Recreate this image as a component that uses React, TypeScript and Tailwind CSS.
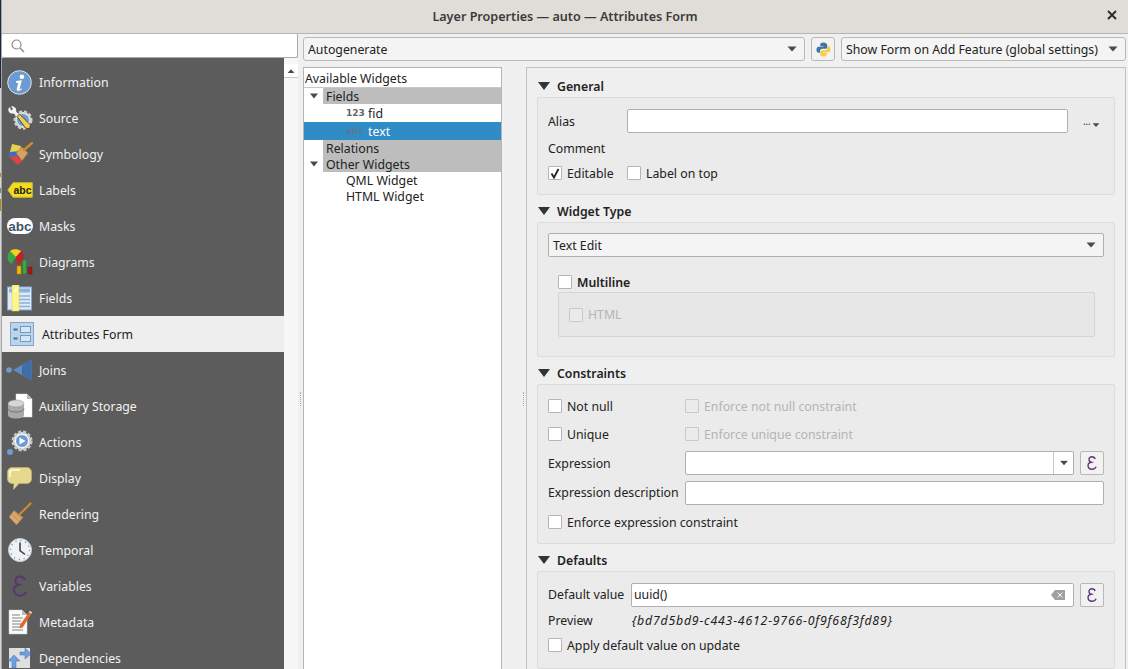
import React from 'react';

const FONT = { fontFamily: '"Noto Sans", sans-serif' };

// flex item text: the extra top padding moves the label 1px down inside its centred row
function T({ children, className = '' }: { children: React.ReactNode; className?: string }) {
  return <span className={`pt-[2px] ${className}`}>{children}</span>;
}

function Caret({ className = '' }: { className?: string }) {
  return (
    <svg width="10" height="6" viewBox="0 0 10 6" className={className}>
      <path d="M0.5 0.5h9L5 5.5z" fill="#4a4a4a" />
    </svg>
  );
}

function SectionArrow() {
  return (
    <svg width="12" height="8" viewBox="0 0 12 8" className="shrink-0">
      <path d="M0 0h12L6 8z" fill="#333" />
    </svg>
  );
}

function InfoIcon() {
  return (
    <svg width="25" height="25" viewBox="0 0 26 26">
      <circle cx="13" cy="13" r="12.3" fill="#6b9bd2" stroke="#dfe8f3" />
      <circle cx="15.5" cy="7" r="2.4" fill="#fff" />
      <path d="M9.5 11.5l6-.8-2.3 8.6c-.2.8.6.8 2-.3l.4.8c-2.3 2.2-6 3-5.4-.4l1.5-5.9-2.2-.3z" fill="#fff" />
    </svg>
  );
}

function SourceIcon() {
  return (
    <svg width="26" height="24" viewBox="0 0 26 24">
      <circle cx="16" cy="14" r="8" fill="#e6e6e6" stroke="#d0d0d0" strokeDasharray="3 1.8" strokeWidth="3" />
      <circle cx="16" cy="14" r="6" fill="#6f9bd0" />
      <path d="M3 1c-2 1-2.500 4 0 6 2 1 3.500.5 4.500 1l4 4 2-2-4-4c-.5-1 0-2.500-1-4C7 .5 5.500 0 4 .5l2 2.500-2 1.500z" fill="#f2f2f2" />
      <path d="M10 10.500l2.500-2.500 11 11-1 4-4-1z" fill="#e9cf55" stroke="#3a3210" strokeWidth=".8" />
    </svg>
  );
}

function SymbologyIcon() {
  return (
    <svg width="26" height="24" viewBox="0 0 26 24">
      <path d="M1 14l8-1 6 6-4 4z" fill="#d9444a" />
      <path d="M2 9l10-2 3 6-13 2z" fill="#3f6fb8" />
      <path d="M5 2l9 2-1 5-10 1z" fill="#e8d04a" />
      <path d="M9 11l6-6 6 6-6 8z" fill="#d9a066" stroke="#9a6a30" strokeWidth=".6" />
      <path d="M17 8l8-7" stroke="#d08a2a" strokeWidth="2.4" strokeLinecap="round" />
    </svg>
  );
}

function LabelsIcon() {
  return (
    <svg width="26" height="16" viewBox="0 0 26 16">
      <path d="M6 .7h19.3v14.6H6L.8 8z" fill="#f5dc1c" stroke="#c9b53a" />
      <text x="15.5" y="12" fontSize="10.5" fontWeight="700" textAnchor="middle" fill="#222" fontFamily="Liberation Sans, sans-serif">abc</text>
    </svg>
  );
}

function MasksIcon() {
  return (
    <svg width="28" height="18" viewBox="0 0 28 18">
      <rect x="1" y="1" width="26" height="16" rx="8" fill="#fff" />
      <text x="14" y="14" fontSize="13.5" fontWeight="700" textAnchor="middle" fill="#44546a" fontFamily="Liberation Sans, sans-serif">abc</text>
    </svg>
  );
}

function DiagramsIcon() {
  return (
    <svg width="26" height="26" viewBox="0 0 26 26">
      <path d="M9 8L8 0.5C4 .5 .5 3.5.5 8c0 3 1.500 5.500 4 7z" fill="#3aa648" />
      <path d="M9 8L3 2c3-2.500 8-2.500 11 0z" fill="#f2cf20" />
      <path d="M9 8l6-6c2 2 2 8 0 11l-5 2.500z" fill="#c71f1f" />
      <rect x="10" y="17" width="4" height="8" fill="#f4b800" stroke="#b57d00" strokeWidth=".5" />
      <rect x="15.500" y="11" width="4" height="14" fill="#3aa648" stroke="#1e7a2a" strokeWidth=".5" />
      <rect x="21" y="18" width="4" height="7" fill="#a3191c" stroke="#6e1012" strokeWidth=".5" />
    </svg>
  );
}

function FieldsIcon() {
  return (
    <svg width="26" height="27" viewBox="0 0 26 27">
      <rect x=".5" y="2" width="24" height="23" fill="#dfe9f4" stroke="#7ea6d0" />
      <rect x="2" y="3.500" width="21" height="4" fill="#8db3da" />
      <path d="M9 11h14M9 14.500h14M9 18h14M9 21.500h14" stroke="#8db3da" strokeWidth="1.500" />
      <rect x="5" y="0" width="7" height="26" fill="#fbf68d" stroke="#dcd24a" strokeWidth=".5" />
      <rect x="7.500" y="4.500" width="2" height="2" fill="#fff" />
    </svg>
  );
}

function AttrFormIcon() {
  return (
    <svg width="24" height="24" viewBox="0 0 24 24">
      <rect x=".5" y=".5" width="23" height="23" fill="#bcd3e8" stroke="#7ea6d0" />
      <rect x="10.500" y="4.500" width="10" height="6" fill="#d8e6f3" stroke="#6f9bc8" />
      <rect x="10.500" y="13.500" width="10" height="6" fill="#d8e6f3" stroke="#6f9bc8" />
      <rect x="3.500" y="6.500" width="4" height="2" fill="#456f9c" />
      <rect x="3.500" y="15.500" width="4" height="2" fill="#456f9c" />
    </svg>
  );
}

function JoinsIcon() {
  return (
    <svg width="27" height="22" viewBox="0 0 27 22">
      <circle cx="3" cy="11" r="2.800" fill="#6f9bd0" />
      <path d="M7 11L25.500.5v21z" fill="#5d8cc2" />
      <path d="M16 6l9.500-5.500v21L16 16z" fill="#3f6ea6" />
    </svg>
  );
}

function StorageIcon() {
  return (
    <svg width="26" height="26" viewBox="0 0 26 26">
      <path d="M9 1h11l5 5v18H9z" fill="#fff" stroke="#ddd" strokeWidth=".5" />
      <path d="M20 1v5h5z" fill="#bbb" />
      <path d="M1 11v11c0 2 3 3.500 8 3.500s8-1.500 8-3.500V11z" fill="#a9a9a9" />
      <ellipse cx="9" cy="10.500" rx="8" ry="3.500" fill="#d6d6d6" stroke="#8d8d8d" strokeWidth=".5" />
      <path d="M1 15.500c0 2 3 3.500 8 3.500s8-1.500 8-3.500" fill="none" stroke="#666" strokeWidth=".8" />
    </svg>
  );
}

function ActionsIcon() {
  return (
    <svg width="28" height="28" viewBox="0 0 28 28">
      <circle cx="16" cy="13" r="9" fill="#e2e2e2" stroke="#c8c8c8" strokeDasharray="3 1.800" strokeWidth="3" />
      <circle cx="16" cy="13" r="6.500" fill="#6b9bd2" stroke="#fff" />
      <path d="M13.500 9.500l6 3.500-6 3.500z" fill="#fff" />
      <circle cx="4" cy="24" r="3" fill="#6f9bd0" />
    </svg>
  );
}

function DisplayIcon() {
  return (
    <svg width="25" height="23" viewBox="0 0 25 23">
      <path d="M5 .5h15c2.500 0 4.500 2 4.500 4.500v7c0 2.500-2 4.500-4.500 4.500h-8L6.500 22.500 7 16.500H5C2.500 16.500.5 14.500.5 12V5C.5 2.500 2.500.5 5 .5z" fill="#e6d98f" stroke="#c9bb6a" strokeWidth=".6" />
      <path d="M3 10V5.500C3 4 4 3 5.500 3H13" fill="none" stroke="#fffbe0" strokeWidth="1.500" />
    </svg>
  );
}

function RenderingIcon() {
  return (
    <svg width="24" height="24" viewBox="0 0 24 24">
      <path d="M6 8.500l9 7-6.500 7.500L1 15z" fill="#d9a870" stroke="#a97a3e" strokeWidth=".6" />
      <path d="M4 12l7 7M6.500 10l7 6.500" stroke="#a97a3e" strokeWidth=".6" />
      <path d="M12 12L22.500 1.500" stroke="#d08a2a" strokeWidth="2.200" strokeLinecap="round" />
    </svg>
  );
}

function TemporalIcon() {
  return (
    <svg width="24" height="24" viewBox="0 0 24 24">
      <circle cx="12" cy="12" r="11.500" fill="#f0f2f5" stroke="#c8ccd2" />
      <circle cx="12" cy="12" r="9.500" fill="none" stroke="#6f9bd0" strokeWidth="1.400" strokeDasharray="1.200 3.770" />
      <path d="M12 4.500V12.500l5 4" fill="none" stroke="#444" strokeWidth="1.600" />
    </svg>
  );
}

function Epsilon({ className = '' }: { className?: string }) {
  return (
    <svg width="16" height="20" viewBox="0 0 16 20" className={className}>
      <path
        d="M12.300 4.500C11.800 2.500 10.300 1.300 8 1.300 5.500 1.300 3.800 2.800 3.800 5c0 2 1.600 3.500 3.700 4-3 .3-5 2-5 4.500 0 3 2.400 5.200 5.500 5.200 2.600 0 4.600-1.300 5.700-3.600"
        fill="none"
        stroke="#5a3571"
        strokeWidth="1.900"
      />
      <path d="M6.500 9h3.500" stroke="#5a3571" strokeWidth="1.200" />
    </svg>
  );
}

function MetadataIcon() {
  return (
    <svg width="24" height="26" viewBox="0 0 24 26">
      <path d="M1 1h13l5 5v19H1z" fill="#fafafa" stroke="#ccc" strokeWidth=".5" />
      <path d="M14 1v5h5z" fill="#bbb" />
      <path d="M4 6h8M4 9h11M4 12h9M4 15h11M4 18h11M4 21h11" stroke="#666" strokeWidth=".8" />
      <path d="M12 16L21 3l2.500 1.800L15 18l-3.500 1.500z" fill="#e06a2c" />
      <path d="M21 3l.8-1.200 2.200 1.600-.5 1.400z" fill="#eee" />
    </svg>
  );
}

function DepsIcon() {
  return (
    <svg width="25" height="22" viewBox="0 0 25 22">
      <rect x="2" y="1" width="21" height="20" fill="#dfdfdf" />
      <path d="M13 5h5V1l6 6-6 5V8h-5z" fill="#6f9fdc" stroke="#3f6fb0" strokeWidth=".5" />
      <path d="M1 14l6-6 6 6H9v7H5v-7z" fill="#6f9fdc" stroke="#3f6fb0" strokeWidth=".5" />
    </svg>
  );
}

const navItems = [
  { label: 'Information', icon: <InfoIcon /> },
  { label: 'Source', icon: <SourceIcon /> },
  { label: 'Symbology', icon: <SymbologyIcon /> },
  { label: 'Labels', icon: <LabelsIcon /> },
  { label: 'Masks', icon: <MasksIcon /> },
  { label: 'Diagrams', icon: <DiagramsIcon /> },
  { label: 'Fields', icon: <FieldsIcon /> },
  { label: 'Attributes Form', icon: <AttrFormIcon />, active: true },
  { label: 'Joins', icon: <JoinsIcon /> },
  { label: 'Auxiliary Storage', icon: <StorageIcon /> },
  { label: 'Actions', icon: <ActionsIcon /> },
  { label: 'Display', icon: <DisplayIcon /> },
  { label: 'Rendering', icon: <RenderingIcon /> },
  { label: 'Temporal', icon: <TemporalIcon /> },
  { label: 'Variables', icon: <Epsilon className="scale-110" /> },
  { label: 'Metadata', icon: <MetadataIcon /> },
  { label: 'Dependencies', icon: <DepsIcon /> },
];

function Sidebar() {
  return (
    <div className="w-[296px] shrink-0 h-full flex flex-col">
      <div className="h-[24px] bg-white border border-[#a8a8a8] border-t-0 border-l-0 rounded-[2px] flex items-center pl-[9px] shrink-0">
        <svg width="14" height="14" viewBox="0 0 14 14">
          <circle cx="5.500" cy="5.500" r="4.500" fill="none" stroke="#8a8a8a" strokeWidth="1.200" />
          <path d="M9 9l4 4" stroke="#8a8a8a" strokeWidth="1.400" />
        </svg>
      </div>
      <div className="flex-1 flex min-h-0">
        <div className="w-[282px] bg-[#5c5c5c] pt-[6px] overflow-hidden">
          {navItems.map((item) =>
            item.active ? (
              <div key={item.label} className="h-[36px] bg-[#eeeeee] flex items-center pl-[8px] text-[#222]">
                <span className="w-[32px] flex items-center">{item.icon}</span>
                <T>{item.label}</T>
              </div>
            ) : (
              <div key={item.label} className="h-[36px] flex items-center text-[#f2f2f2]">
                <span className="w-[35px] mr-[2px] flex items-center justify-center">{item.icon}</span>
                <T>{item.label}</T>
              </div>
            ),
          )}
        </div>
        <div className="w-[14px] bg-[#f7f7f7] pt-[6px]">
          <div className="h-[14px] flex items-center justify-center bg-white border-b border-[#c8c8c8]">
            <Caret className="rotate-180 scale-75" />
          </div>
        </div>
      </div>
    </div>
  );
}

function TreeRow({ label, heading, caret }: { label: string; heading?: boolean; caret?: boolean }) {
  return (
    <div className="h-[16px] flex items-center">
      <span className="w-[19px] flex justify-center">{caret && <Caret className="scale-x-90" />}</span>
      <span className={heading ? 'flex-1 h-full bg-[#bdbdbd] pl-[3px] pt-[1px] leading-[15px]' : 'pl-[23px] h-full pt-[1px] leading-[15px]'}>{label}</span>
    </div>
  );
}

function FieldRow({ tag, label, selected }: { tag: string; label: string; selected?: boolean }) {
  return (
    <div className={`h-[18px] flex items-center ${selected ? 'bg-[#308cc6] text-white' : ''}`}>
      <span
        className={`ml-[42px] w-[22px] pt-[2px] text-[9px] font-bold ${selected ? 'text-[#567a94]' : 'text-[#666]'}`}
        style={{ fontFamily: '"DejaVu Sans", sans-serif' }}
      >
        {tag}
      </span>
      <T>{label}</T>
    </div>
  );
}

function WidgetTree() {
  return (
    <div className="w-[199px] shrink-0 h-full bg-white border border-[#b5b5b5] border-b-0 text-[#222]">
      <div className="h-[20px] border-b border-[#c8c8c8] pl-[1px] pt-[1px] leading-[19px]">Available Widgets</div>
      <TreeRow label="Fields" heading caret />
      <FieldRow tag="123" label="fid" />
      <FieldRow tag="abc" label="text" selected />
      <TreeRow label="Relations" heading />
      <TreeRow label="Other Widgets" heading caret />
      <TreeRow label="QML Widget" />
      <TreeRow label="HTML Widget" />
    </div>
  );
}

function Check({ checked, disabled }: { checked?: boolean; disabled?: boolean }) {
  return (
    <span
      className={`w-[14px] h-[14px] shrink-0 rounded-[1px] border flex items-center justify-center ${
        disabled ? 'border-[#c9c9c9] bg-[#ebebeb]' : 'border-[#b5b5b5] bg-white'
      }`}
    >
      {checked && (
        <svg width="10" height="11" viewBox="0 0 10 11">
          <path d="M1.500 5.500L4 9.500 8.500 1" fill="none" stroke="#222" strokeWidth="1.800" />
        </svg>
      )}
    </span>
  );
}

function CheckLabel({ label, checked, disabled, bold }: { label: string; checked?: boolean; disabled?: boolean; bold?: boolean }) {
  return (
    <span className={`flex items-center gap-[5px] ${disabled ? 'text-[#b4b4b4]' : ''} ${bold ? 'font-semibold' : ''}`}>
      <Check checked={checked} disabled={disabled} />
      <T>{label}</T>
    </span>
  );
}

function Section({ title, className, children }: { title: string; className: string; children: React.ReactNode }) {
  return (
    <div>
      <div className="h-[16px] flex items-center gap-[7px] pl-[11px] font-semibold text-[#222]">
        <SectionArrow />
        <T>{title}</T>
      </div>
      <div className={`ml-[10px] mr-[10px] mt-[3px] bg-[#ebebeb] border border-[#dcdcdc] rounded-[2px] ${className}`}>
        {children}
      </div>
    </div>
  );
}

function TextBox({ value, className = '', children }: { value?: string; className?: string; children?: React.ReactNode }) {
  return (
    <div className={`h-[24px] bg-white border border-[#b0b0b0] rounded-[2px] flex items-center pl-[2px] ${className}`}>
      <span className="flex-1">{value}</span>
      {children}
    </div>
  );
}

function EpsButton() {
  return (
    <div className="w-[24px] h-[24px] ml-[6px] shrink-0 rounded-[2px] border border-[#b8b8b8] bg-[#f2f2f2] flex items-center justify-center">
      <Epsilon className="scale-[0.72]" />
    </div>
  );
}

function Form() {
  return (
    <div className="flex-1 h-full bg-[#efefef] border border-[#c0c0c0] border-b-0 pt-[10px] text-[#222] overflow-hidden">
      <Section title="General" className="h-[98px] px-[10px] pt-[11px]">
        <div className="flex items-center h-[24px]">
          <T className="w-[79px]">Alias</T>
          <TextBox className="w-[441px]" />
          <span className="ml-[15px] relative w-[18px] text-[#444] leading-[8px] tracking-tighter">
            <span className="text-[11px]">...</span>
            <Caret className="absolute right-0 top-[5px] scale-75" />
          </span>
        </div>
        <div className="h-[22px] mt-[4px] flex items-center">
          <T>Comment</T>
        </div>
        <div className="h-[20px] mt-[4px] flex items-center">
          <span className="w-[79px]">
            <CheckLabel label="Editable" checked />
          </span>
          <CheckLabel label="Label on top" />
        </div>
      </Section>

      <div className="mt-[8px]">
        <Section title="Widget Type" className="h-[135px] px-[10px] pt-[10px]">
          <div className="h-[24px] bg-[#f4f4f4] border border-[#b0b0b0] rounded-[2px] flex items-center justify-between pl-[4px] pr-[7px]">
            <T>Text Edit</T>
            <Caret />
          </div>
          <div className="ml-[10px] mr-[9px] mt-[15px]">
            <div className="h-[20px] flex items-center">
              <CheckLabel label="Multiline" bold />
            </div>
            <div className="h-[45px] border border-[#d4d4d4] rounded-[2px] bg-[#e7e7e7] pl-[10px] flex items-center">
              <CheckLabel label="HTML" disabled />
            </div>
          </div>
        </Section>
      </div>

      <div className="mt-[8px]">
        <Section title="Constraints" className="h-[160px] px-[10px] pt-[11px]">
          <div className="h-[20px] flex items-center">
            <span className="w-[137px]">
              <CheckLabel label="Not null" />
            </span>
            <CheckLabel label="Enforce not null constraint" disabled />
          </div>
          <div className="h-[20px] mt-[8px] flex items-center">
            <span className="w-[137px]">
              <CheckLabel label="Unique" />
            </span>
            <CheckLabel label="Enforce unique constraint" disabled />
          </div>
          <div className="mt-[7px] flex items-center">
            <T className="w-[137px]">Expression</T>
            <TextBox className="flex-1 pr-0">
              <span className="w-[20px] h-full border-l border-[#c8c8c8] flex items-center justify-center">
                <Caret className="scale-90" />
              </span>
            </TextBox>
            <EpsButton />
          </div>
          <div className="mt-[6px] flex items-center">
            <span className="w-[137px] whitespace-nowrap">Expression description</span>
            <TextBox className="flex-1" />
          </div>
          <div className="h-[20px] mt-[7px] flex items-center">
            <CheckLabel label="Enforce expression constraint" />
          </div>
        </Section>
      </div>

      <div className="mt-[8px]">
        <Section title="Defaults" className="h-[98px] px-[10px] pt-[11px]">
          <div className="flex items-center">
            <span className="w-[83px]">Default value</span>
            <TextBox value="uuid()" className="flex-1 pr-[8px]">
              <svg width="14" height="10" viewBox="0 0 14 10">
                <path d="M4 0h10v10H4L0 5z" fill="#a0a0a0" />
                <path d="M6.500 2.500l5 5M11.500 2.500l-5 5" stroke="#f4f4f4" strokeWidth="1" />
              </svg>
            </TextBox>
            <EpsButton />
          </div>
          <div className="h-[20px] mt-[3px] flex items-center">
            <T className="w-[84px]">Preview</T>
            <T className="italic tracking-[0.8px] whitespace-nowrap">{'{bd7d5bd9-c443-4612-9766-0f9f68f3fd89}'}</T>
          </div>
          <div className="h-[20px] mt-[5px] flex items-center">
            <CheckLabel label="Apply default value on update" />
          </div>
        </Section>
      </div>
    </div>
  );
}

export default function App() {
  return (
    <div className="w-[1128px] h-[669px] overflow-hidden flex bg-[#f0f0f0] text-[12.3px]" style={FONT}>
      <div className="w-[2px] shrink-0 h-full flex flex-col border-r border-[#a5a5a5]">
        <div className="h-[88px] bg-[#1c2a44]" />
        <div className="h-[85px] bg-[#d6d6d6]" />
        <div className="h-[4px] bg-[#b8901a]" />
        <div className="h-[11px] bg-[#d6d6d6]" />
        <div className="h-[5px] bg-[#6f8f5a]" />
        <div className="h-[6px] bg-[#d6d6d6]" />
        <div className="h-[12px] bg-[#a98a1e]" />
        <div className="flex-1 bg-[#d6d6d6]" />
      </div>
      <div className="flex-1 flex flex-col h-full min-w-0">
        <div className="h-[34px] shrink-0 bg-[#e0dcd8] border-b border-[#b8b5b2] flex items-center justify-center relative font-semibold text-[#3a3a3a] text-[12.6px]">
          <T>Layer Properties — auto — Attributes Form</T>
          <svg width="10" height="10" viewBox="0 0 10 10" className="absolute right-[11px] top-[10px]">
            <path d="M1 1l8 8M9 1l-8 8" stroke="#2e2e2e" strokeWidth="2" />
          </svg>
        </div>
        <div className="flex-1 flex min-h-0">
          <Sidebar />
          <div className="w-[5px] shrink-0 flex justify-center pt-[358px]">
            <div className="w-[2px] h-[14px] border-l border-dotted border-[#aaa]" />
          </div>
          <div className="flex-1 flex flex-col min-w-0 pr-[2px]">
            <div className="h-[24px] mt-[3px] shrink-0 flex items-center text-[#222]">
              <div className="w-[502px] h-full bg-[#f4f4f4] border border-[#b8b8b8] rounded-[3px] flex items-center justify-between pl-[4px] pr-[7px]">
                <T>Autogenerate</T>
                <Caret />
              </div>
              <div className="w-[24px] h-full ml-[6px] bg-[#f2f2f2] border border-[#b8b8b8] rounded-[3px] flex items-center justify-center">
                <svg width="15" height="15" viewBox="0 0 16 16">
                  <path d="M8 .5c-3 0-3.500 1.300-3.500 2.500v1.500H8V5H2.800C1.300 5 .5 6.300.5 8.200s.8 3.300 2.300 3.300h1.400V9.700c0-1.400 1.100-2.400 2.500-2.400h3.300c1.100 0 2-.9 2-2V3C11.500 1.500 10.500.5 8 .5z" fill="#3f74a8" />
                  <path d="M8 15.500c3 0 3.500-1.300 3.500-2.500v-1.500H8V11h5.200c1.500 0 2.300-1.300 2.300-3.200s-.8-3.300-2.300-3.300h-1.400v1.800c0 1.400-1.100 2.400-2.500 2.400H6.500c-1.100 0-2 .9-2 2V13c0 1.500 1 2.500 3.500 2.500z" fill="#f7cf47" />
                </svg>
              </div>
              <div className="w-[285px] h-full ml-[6px] bg-[#f4f4f4] border border-[#b8b8b8] rounded-[3px] flex items-center justify-between pl-[4px] pr-[7px] whitespace-nowrap">
                <T>Show Form on Add Feature (global settings)</T>
                <Caret />
              </div>
            </div>
            <div className="flex-1 min-h-0 flex mt-[6px]">
              <WidgetTree />
              <div className="w-[24px] shrink-0 flex justify-end pr-[1px] pt-[325px]">
                <div className="w-[2px] h-[14px] border-l border-dotted border-[#aaa]" />
              </div>
              <Form />
            </div>
          </div>
        </div>
      </div>
    </div>
  );
}
